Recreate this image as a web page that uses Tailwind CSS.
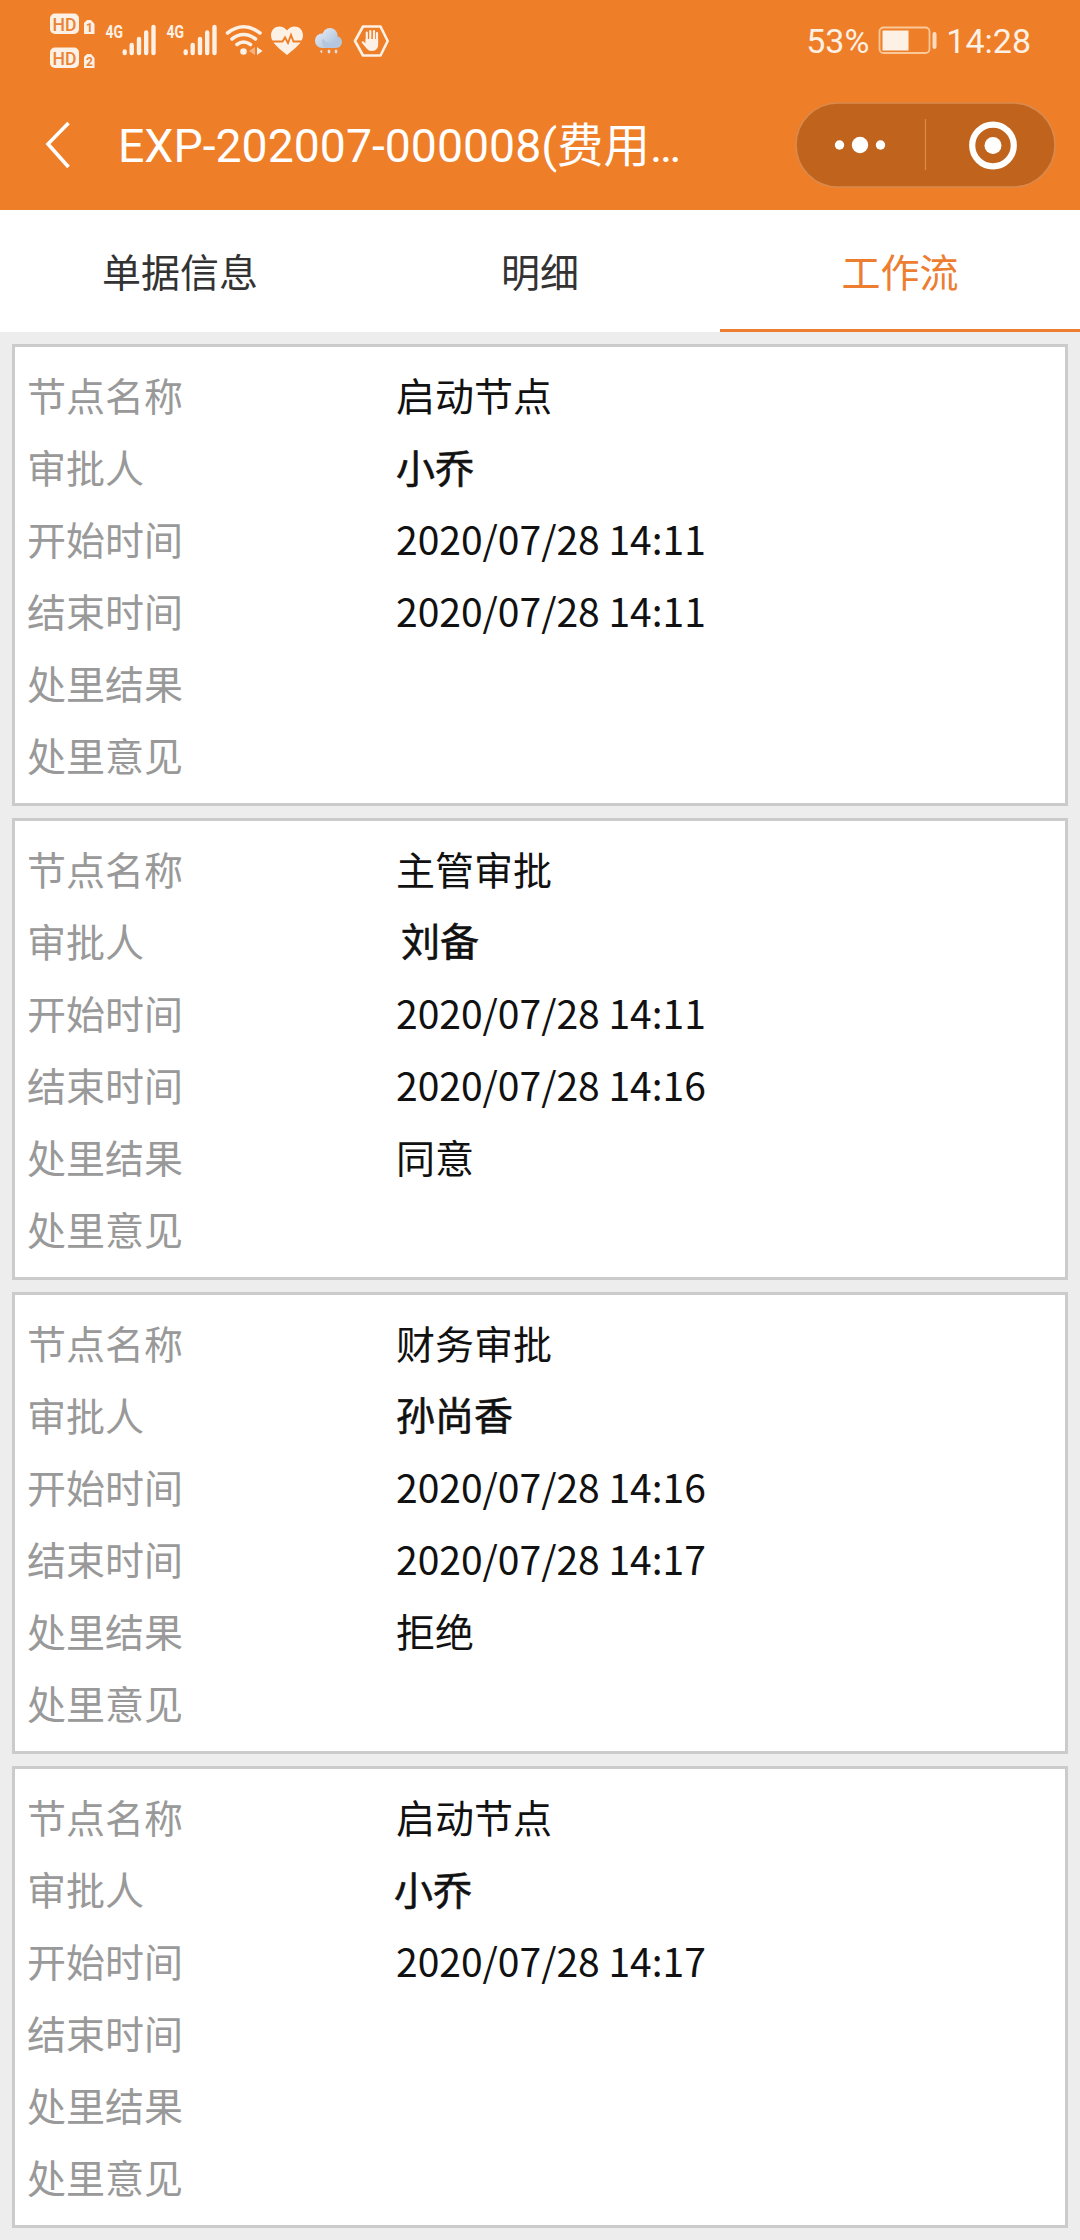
<!DOCTYPE html>
<html lang="zh-CN">
<head>
<meta charset="utf-8">
<title>工作流</title>
<script src="https://cdn.jsdelivr.net/npm/@tailwindcss/browser@4"></script>
</head>
<body class="w-[1080px] h-[2240px] overflow-hidden bg-[#ededed] font-['Noto_Sans_CJK_SC',sans-serif]">
<header class="h-[210px] bg-[#ef7e28] flex flex-col">
  <div class="h-[80px] flex items-center justify-between pr-[50px] text-[#fdf0e4]">
    <svg class="w-[400px] h-[80px]" viewBox="0 0 400 80" fill="none">
      <g fill="#fdf0e4">
        <rect x="50" y="13.5" width="29" height="20.5" rx="5"/>
        <path d="M87 20h4l3.500 4v10H84V23z"/>
        <rect x="50" y="47.500" width="29" height="20.500" rx="5"/>
        <path d="M87 54h4l3.500 4v10H84V57z"/>
      </g>
      <g fill="#e98436" font-family="Roboto, sans-serif" font-weight="700">
        <text x="52.500" y="30.500" font-size="19" font-weight="500" textLength="24" lengthAdjust="spacingAndGlyphs">HD</text>
        <text x="52.500" y="64.500" font-size="19" font-weight="500" textLength="24" lengthAdjust="spacingAndGlyphs">HD</text>
        <text x="86" y="32" font-size="12">1</text>
        <text x="86" y="66" font-size="12">2</text>
      </g>
      <g fill="#fdf0e4" font-family="Roboto, sans-serif" font-weight="700" font-size="18">
        <text x="105.500" y="38" textLength="17.500" lengthAdjust="spacingAndGlyphs">4G</text>
        <text x="166.500" y="38" textLength="17.500" lengthAdjust="spacingAndGlyphs">4G</text>
      </g>
      <g stroke="#fdf0e4" stroke-width="4.400" stroke-linecap="round">
        <path d="M124.700 51.500v1.500M131.700 45v8M139 39v14M146.200 32.500V53M153.500 27v26"/>
        <path d="M185.700 51.500v1.500M192.700 45v8M200 39v14M207.200 32.500V53M214.500 27v26"/>
      </g>
      <g stroke="#fdf0e4" stroke-width="3.600" stroke-linecap="round">
        <path d="M227.500 33q16-12.500 32.500 0M232 39q11.500-9 23.500 0M237 44.500q6.500-5 13.500 0"/>
      </g>
      <circle cx="243.500" cy="51.500" r="3.300" fill="#fdf0e4"/>
      <path d="M249 51l6-4v8z" fill="#f6b27e"/>
      <path d="M257 47l5.500 4-5.500 4z" fill="#fdf0e4"/>
      <path d="M287 55C280 49 271 43 271 35.500C271 26 282 23.500 287 30.500C292 23.500 303 26 303 35.500C303 43 294 49 287 55z" fill="#fdf0e4"/>
      <path d="M270 41.500h12.500l2.500-4 3 5.500 3-8 2.500 6.500H304" stroke="#ef7e28" stroke-width="1.900"/>
      <defs><linearGradient id="cloud" x1="0" y1="0" x2="1" y2="1"><stop offset="0" stop-color="#e2e9f2"/><stop offset="1" stop-color="#adc2dc"/></linearGradient></defs>
      <rect x="315" y="33.500" width="18" height="14.500" rx="7.200" fill="url(#cloud)"/>
      <rect x="322" y="36" width="20" height="12" rx="6" fill="#b5c7de"/>
      <circle cx="330" cy="35.500" r="7.500" fill="url(#cloud)"/>
      <path d="M320 51.500l2-1.500v3zM328 50h2v3h-2zM335 50h2v3h-2z" fill="#e3dcd8" stroke="#e3dcd8" stroke-width=".5"/>
      <path d="M363 26.500h17.500l7.200 14.500-7.200 14.500H363L355 41z" stroke="#fdf0e4" stroke-width="2.600" stroke-linejoin="round"/>
      <path d="M366.800 44v-11.500M370.300 43v-12M374 43v-12M377 44v-11" stroke="#fdf0e4" stroke-width="2.200" stroke-linecap="round"/>
      <path d="M365.600 39h12.500v7q-1 5-6.500 5q-3 0-5-2.500l-5-6q.5-2 2.500-.5l1.500 1.500z" fill="#fdf0e4"/>
    </svg>
    <div class="flex items-center font-['Roboto',sans-serif] text-[34px] leading-none pt-px">
      <span>53%</span>
      <svg class="w-[60px] h-[30px] ml-[9px] mr-[8px]" viewBox="0 0 60 30">
        <rect x="1.500" y="1.500" width="50" height="25.500" rx="4" fill="none" stroke="#fbc899" stroke-width="1.800"/>
        <rect x="4.500" y="4.500" width="26" height="20" fill="#fdf0e4"/>
        <rect x="54.500" y="6" width="4" height="17" rx="2" fill="#fbdcc0"/>
      </svg>
      <span class="-mr-px">14:28</span>
    </div>
  </div>
  <div class="h-[130px] flex items-center pl-[44px] pr-[24px]">
    <svg class="w-[28px] h-[48px]" viewBox="0 0 28 48" fill="none" stroke="#fff" stroke-width="3.600"><path d="M24.500 2L4 23L24.500 46"/></svg>
    <h1 class="ml-[46px] mt-[3px] w-[657px] text-white text-[46.4px] leading-none whitespace-nowrap font-['Roboto','Noto_Sans_CJK_SC',sans-serif]">EXP-202007-000008(费用…</h1>
    <div class="ml-[20px] w-[261px] shrink-0 h-[86px]">
      <svg class="w-[261px] h-[86px]" viewBox="0 0 261 86">
        <rect x="1" y="1" width="259" height="84" rx="42" fill="#c0641d" stroke="#d98a4e" stroke-width="1.600"/>
        <path d="M130.500 17v51" stroke="#d98a4e" stroke-width="1.200"/>
        <g fill="#fff"><circle cx="44.500" cy="43" r="4.700"/><circle cx="65" cy="43" r="8.200"/><circle cx="85.500" cy="43" r="4.700"/><circle cx="198" cy="43.500" r="8.500"/></g>
        <circle cx="198" cy="43.500" r="20.800" fill="none" stroke="#fff" stroke-width="6.200"/>
      </svg>
    </div>
  </div>
</header>
<nav class="h-[122px] bg-white grid grid-cols-3 text-[39px] text-[#333]">
  <div class="flex items-center justify-center pb-[2px]">单据信息</div>
  <div class="flex items-center justify-center pb-[2px]">明细</div>
  <div class="flex items-center justify-center text-[#ed7d31] border-b-3 border-[#ed7d31] pt-px">工作流</div>
</nav>
<main id="list" class="flex flex-col gap-3 p-3"></main>
<script>
const labels = ['节点名称', '审批人', '开始时间', '结束时间', '处里结果', '处里意见'];
const nodes = [
  ['启动节点', '小乔', '2020/07/28 14:11', '2020/07/28 14:11', '', ''],
  ['主管审批', '刘备', '2020/07/28 14:11', '2020/07/28 14:16', '同意', ''],
  ['财务审批', '孙尚香', '2020/07/28 14:16', '2020/07/28 14:17', '拒绝', ''],
  ['启动节点', '小乔', '2020/07/28 14:17', '', '', '']
];
const nameClass = ['', 'pl-[5px] -mt-px', '-mt-px', '-ml-[2px]'];
document.getElementById('list').innerHTML = nodes.map((n, k) =>
  `<section class="bg-white border-3 border-[#cbcbcb] px-3 pt-[11px] pb-[13px] text-[39px] leading-[72px]">${n.map((v, i) =>
    `<div class="flex h-[72px]"><span class="w-[369px] text-[#999]">${labels[i]}</span><span class="text-[#111] ${i === 1 ? '[-webkit-text-stroke:0.6px_#111] ' + nameClass[k] : ''}">${v}</span></div>`).join('')}</section>`).join('');
</script>
</body>
</html>
